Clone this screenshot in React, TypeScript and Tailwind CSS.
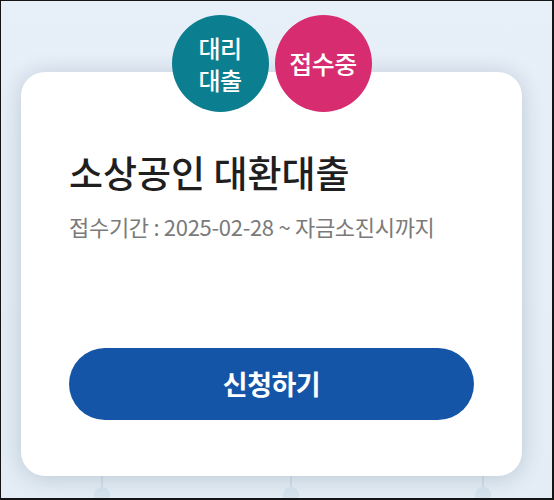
import React from "react";

export default function App() {
  const font = { fontFamily: '"Noto Sans CJK KR", "Noto Sans", sans-serif' };
  return (
    <div
      style={font}
      className="relative box-border h-[500px] w-[554px] overflow-hidden border-t border-l border-r-2 border-b-2 border-[#141414] bg-gradient-to-b from-[#e7eff8] to-[#e4edf5]"
    >
      <div className="flex flex-col pl-[20px] pt-[71px]">
        <div className="relative h-[404px] w-[501px] rounded-[24px] bg-white shadow-[0_2px_22px_rgba(40,70,100,0.22)]">
          <div className="absolute left-1/2 top-[-57px] flex -translate-x-1/2 gap-[6px]">
            <div className="flex h-[97px] w-[97px] flex-col items-center justify-center rounded-full bg-[#0b7e90] text-[24px] font-medium leading-[32px] tracking-[-0.5px] text-white">
              <span>대리</span>
              <span>대출</span>
            </div>
            <div className="flex h-[97px] w-[97px] items-center justify-center rounded-full bg-[#d72c6f] text-[25px] font-medium tracking-[-0.5px] text-white">
              접수중
            </div>
          </div>
          <div className="flex flex-col px-[48px] pt-[78px]">
            <h1 className="text-[37px] font-medium leading-[44px] tracking-[0px] text-[#1f1f1f]">
              소상공인 대환대출
            </h1>
            <p className="mt-[19px] text-[22px] leading-[26px] tracking-[-0.3px] text-[#7a7a7a]">
              접수기간 : 2025-02-28 ~ 자금소진시까지
            </p>
            <button className="mt-[109px] flex h-[72px] w-[405px] items-center justify-center rounded-full bg-[#1555a8] text-[27px] font-bold tracking-[-0.5px] text-white">
              신청하기
            </button>
          </div>
        </div>
        <div className="flex pl-[73px]">
          <Deco />
          <div className="ml-[173px]">
            <Deco />
          </div>
          <div className="ml-[176px]">
            <Deco />
          </div>
        </div>
      </div>
    </div>
  );
}

function Deco() {
  return (
    <div className="flex w-4 flex-col items-center">
      <div className="h-[11px] w-[2px] bg-[#d3e0ea]" />
      <div className="h-4 w-4 rounded-full bg-[#d6e4ee]" />
    </div>
  );
}
